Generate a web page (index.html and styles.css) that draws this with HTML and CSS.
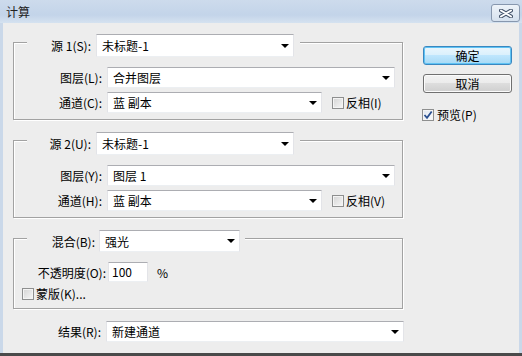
FILE: index.html
```html
<!DOCTYPE html>
<html lang="zh-CN">
<head>
    <meta charset="UTF-8">
    <title>计算</title>
    <link rel="stylesheet" href="styles.css">
</head>
<body>
    <div class="window">
        <div class="titlebar">
            <span class="title">计算</span>
            <div class="close">
                <svg width="14" height="9" viewBox="0 0 14 9">
                    <path d="M2 1.5 L12 7.5 M12 1.5 L2 7.5" stroke="#44536a" stroke-width="4" stroke-linecap="round"/>
                    <path d="M2 1.5 L12 7.5 M12 1.5 L2 7.5" stroke="#ffffff" stroke-width="2" stroke-linecap="round"/>
                </svg>
            </div>
        </div>
        <div class="frame">
            <div class="main">
                <!-- source 1 -->
                <div class="group">
                    <div class="legend">
                        <span class="label">源 1(S):</span>
                        <div class="select tall src"><span>未标题-1</span><i class="arrow"></i></div>
                    </div>
                    <div class="row first">
                        <span class="label">图层(L):</span>
                        <div class="select wide"><span>合并图层</span><i class="arrow"></i></div>
                    </div>
                    <div class="row">
                        <span class="label">通道(C):</span>
                        <div class="select channel"><span>蓝 副本</span><i class="arrow"></i></div>
                        <span class="check"></span><span class="check-text">反相(I)</span>
                    </div>
                </div>

                <!-- source 2 -->
                <div class="group">
                    <div class="legend">
                        <span class="label">源 2(U):</span>
                        <div class="select tall src"><span>未标题-1</span><i class="arrow"></i></div>
                    </div>
                    <div class="row first">
                        <span class="label">图层(Y):</span>
                        <div class="select wide"><span>图层 1</span><i class="arrow"></i></div>
                    </div>
                    <div class="row">
                        <span class="label">通道(H):</span>
                        <div class="select channel"><span>蓝 副本</span><i class="arrow"></i></div>
                        <span class="check"></span><span class="check-text">反相(V)</span>
                    </div>
                </div>

                <!-- blending -->
                <div class="group">
                    <div class="legend blend">
                        <span class="label">混合(B):</span>
                        <div class="select mode"><span>强光</span><i class="arrow"></i></div>
                    </div>
                    <div class="row first">
                        <span class="label opacity-label">不透明度(O):</span>
                        <div class="textbox">100</div>
                        <span class="percent">%</span>
                    </div>
                    <div class="row mask">
                        <span class="check"></span><span class="check-text">蒙版(K)...</span>
                    </div>
                </div>

                <div class="result">
                    <span class="label">结果(R):</span>
                    <div class="select result-select"><span>新建通道</span><i class="arrow"></i></div>
                </div>
            </div>

            <div class="side">
                <button class="btn primary">确定</button>
                <button class="btn">取消</button>
                <div class="preview">
                    <span class="check checked">
                        <svg width="10" height="10" viewBox="0 0 10 10">
                            <path d="M1.5 5 L4 7.8 L8.7 1.5" fill="none" stroke="#2a4f8f" stroke-width="1.8"/>
                        </svg>
                    </span>
                    <span class="check-text">预览(P)</span>
                </div>
            </div>
        </div>
    </div>
</body>
</html>
```

FILE: styles.css
```css
body {
    margin: 0;
    font-family: "Noto Sans CJK SC", "Open Sans", sans-serif;
    font-size: 12px;
    color: #000;
    background: #ededed;
    overflow: hidden;
}
.window {
    width: 522px;
    height: 356px;
    box-sizing: border-box;
    display: flex;
    flex-direction: column;
    border-bottom: 3px solid #4a4a4a;
    overflow: hidden;
}
.titlebar {
    height: 23px;
    flex: none;
    display: flex;
    justify-content: space-between;
    padding: 0 2px 0 6px;
    background: linear-gradient(#cddbec, #c3d4e9 65%, #d5e2f0);
}
.title {
    line-height: 24px;
    color: #222;
}
.close {
    width: 27px;
    height: 16px;
    margin-top: 4px;
    border: 1px solid #8797ae;
    border-radius: 3px;
    background: linear-gradient(#eef3f9, #d6e1ee);
    display: flex;
    align-items: center;
    justify-content: center;
}
.frame {
    flex: 1;
    display: flex;
    background: #ededed;
    border-left: 3px solid #cad8e9;
    border-right: 3px solid #cad8e9;
    padding: 19px 0 0 10px;
}
.main {
    width: 393px;
    flex: none;
}

/* group boxes */
.group {
    width: 390px;
    box-sizing: border-box;
    border: 1px solid #a2a2a2;
    box-shadow: 1px 1px 0 #fff, inset 1px 1px 0 #fff;
    padding-bottom: 6px;
    margin-bottom: 20px;
}
.legend {
    display: flex;
    align-items: center;
    width: 273px;
    margin: -9px 0 0 13px;
    background: #ededed;
}
.legend .label {
    width: 69px;
    box-sizing: border-box;
    padding-right: 5px;
    text-align: right;
}
.legend.blend {
    width: 218px;
}
.legend.blend .label {
    width: 72px;
    padding-right: 4px;
}
.row {
    display: flex;
    align-items: center;
    margin-top: 4px;
}
.row.first {
    margin-top: 10px;
}
.row .label, .result .label {
    width: 93px;
    box-sizing: border-box;
    padding-right: 5px;
    text-align: right;
}
.row .opacity-label {
    width: 94px;
    padding-right: 2px;
}

/* dropdowns */
.select {
    position: relative;
    height: 21px;
    box-sizing: border-box;
    background: #fff;
    border: 1px solid;
    border-color: #acadb2 #e3e4e8 #eceff2 #e3e4e8;
    display: flex;
    align-items: center;
    padding-left: 5px;
}
.select.tall {
    height: 23px;
}
.select.src {
    width: 198px;
}
.select.wide {
    width: 288px;
}
.select.channel {
    width: 215px;
    margin-right: 10px;
}
.select.mode {
    width: 141px;
    height: 22px;
}
.select.result-select {
    width: 298px;
}
.arrow {
    position: absolute;
    right: 4px;
    top: 50%;
    margin-top: -2px;
    border-left: 4px solid transparent;
    border-right: 4px solid transparent;
    border-top: 4px solid #000;
}
.textbox {
    width: 40px;
    height: 20px;
    box-sizing: border-box;
    background: #fff;
    border: 1px solid;
    border-color: #acadb2 #e3e4e8 #eceff2 #e3e4e8;
    padding-left: 3px;
    line-height: 18px;
}
.percent {
    margin-left: 9px;
}

/* checkboxes */
.check {
    width: 12px;
    height: 12px;
    box-sizing: border-box;
    border: 1px solid #8e8f8f;
    background: linear-gradient(135deg, #d4d4d4, #f7f7f7);
    box-shadow: inset 0 0 0 1px #f4f4f4;
    flex: none;
    display: flex;
    align-items: center;
    justify-content: center;
}
.check.checked {
    background: linear-gradient(135deg, #dfe5ee, #fbfcfd);
}
.check-text {
    margin-left: 2px;
}
.row.mask {
    margin-top: 3px;
    padding-left: 8px;
    height: 17px;
}
.result {
    display: flex;
    align-items: center;
    margin-top: -8px;
}

/* buttons */
.side {
    margin-left: 17px;
    display: flex;
    flex-direction: column;
    padding-top: 4px;
}
.btn {
    width: 89px;
    height: 19px;
    padding: 0;
    font-family: inherit;
    font-size: 12px;
    color: #000;
    border: 1px solid #707070;
    border-radius: 3px;
    background: linear-gradient(#f2f2f2 0%, #ebebeb 50%, #dddddd 50%, #cfcfcf 100%);
    box-shadow: inset 0 0 0 1px #fbfbfb;
    margin-bottom: 9px;
}
.btn.primary {
    border-color: #3a87c0;
    background: linear-gradient(#eaf6fd 0%, #d9f0fc 50%, #bee6fd 50%, #a7d9f5 100%);
    box-shadow: inset 0 0 0 1px #5fc3f4;
}
.preview {
    display: flex;
    align-items: center;
    margin: 4px 0 0 -1px;
    height: 17px;
}
.preview .check-text {
    margin-left: 3px;
}
```
